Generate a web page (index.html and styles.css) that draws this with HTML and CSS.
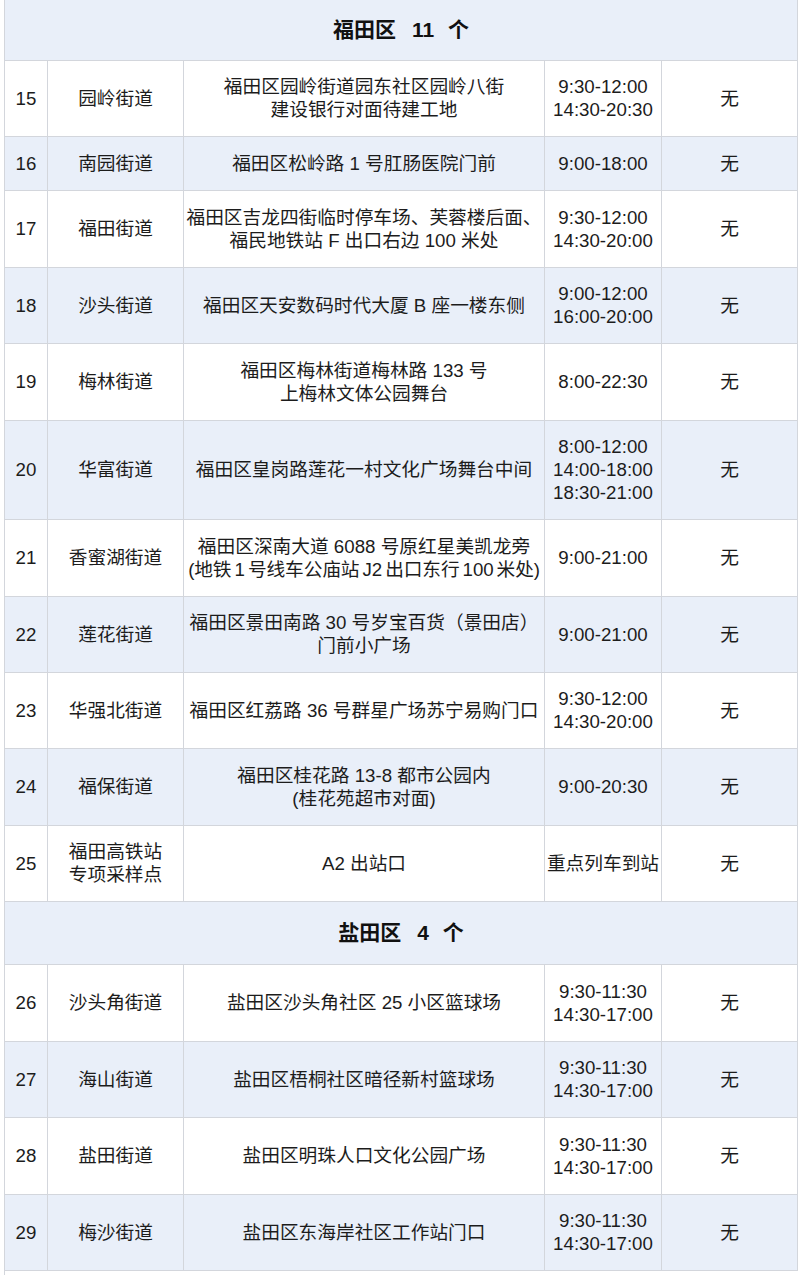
FILE: index.html
```
<!DOCTYPE html>
<html lang="zh-CN">
<head>
<meta charset="utf-8">
<title>核酸采样点</title>
<link rel="stylesheet" href="styles.css">
</head>
<body>
<table class="sites">
  <colgroup>
    <col class="c-no"><col class="c-street"><col class="c-addr"><col class="c-time"><col class="c-note">
  </colgroup>
  <tbody>
    <tr class="district h60"><td colspan="5"><span>福田区</span><span class="cnt">11</span><span>个</span></td></tr>
    <tr class="h76"><td>15</td><td>园岭街道</td><td>福田区园岭街道园东社区园岭八街<br>建设银行对面待建工地</td><td>9:30-12:00<br>14:30-20:30</td><td>无</td></tr>
    <tr class="alt h54"><td>16</td><td>南园街道</td><td>福田区松岭路 1 号肛肠医院门前</td><td>9:00-18:00</td><td>无</td></tr>
    <tr class="h77"><td>17</td><td>福田街道</td><td>福田区吉龙四街临时停车场、芙蓉楼后面、<br>福民地铁站 F 出口右边 100 米处</td><td>9:30-12:00<br>14:30-20:00</td><td>无</td></tr>
    <tr class="alt h76"><td>18</td><td>沙头街道</td><td>福田区天安数码时代大厦 B 座一楼东侧</td><td>9:00-12:00<br>16:00-20:00</td><td>无</td></tr>
    <tr class="h77"><td>19</td><td>梅林街道</td><td>福田区梅林街道梅林路 133 号<br>上梅林文体公园舞台</td><td>8:00-22:30</td><td>无</td></tr>
    <tr class="alt h99"><td>20</td><td>华富街道</td><td>福田区皇岗路莲花一村文化广场舞台中间</td><td>8:00-12:00<br>14:00-18:00<br>18:30-21:00</td><td>无</td></tr>
    <tr class="h77"><td>21</td><td>香蜜湖街道</td><td>福田区深南大道 6088 号原红星美凯龙旁<br><span class="tight">(地铁 1 号线车公庙站 J2 出口东行 100 米处)</span></td><td>9:00-21:00</td><td>无</td></tr>
    <tr class="alt h76"><td>22</td><td>莲花街道</td><td>福田区景田南路 30 号岁宝百货（景田店）<br>门前小广场</td><td>9:00-21:00</td><td>无</td></tr>
    <tr class="h76"><td>23</td><td>华强北街道</td><td>福田区红荔路 36 号群星广场苏宁易购门口</td><td>9:30-12:00<br>14:30-20:00</td><td>无</td></tr>
    <tr class="alt h77"><td>24</td><td>福保街道</td><td>福田区桂花路 13-8 都市公园内<br>(桂花苑超市对面)</td><td>9:00-20:30</td><td>无</td></tr>
    <tr class="h76"><td>25</td><td>福田高铁站<br>专项采样点</td><td>A2 出站口</td><td>重点列车到站</td><td>无</td></tr>
    <tr class="district h63"><td colspan="5"><span>盐田区</span><span class="cnt">4</span><span>个</span></td></tr>
    <tr class="h77"><td>26</td><td>沙头角街道</td><td>盐田区沙头角社区 25 小区篮球场</td><td>9:30-11:30<br>14:30-17:00</td><td>无</td></tr>
    <tr class="alt h76"><td>27</td><td>海山街道</td><td>盐田区梧桐社区暗径新村篮球场</td><td>9:30-11:30<br>14:30-17:00</td><td>无</td></tr>
    <tr class="h77"><td>28</td><td>盐田街道</td><td>盐田区明珠人口文化公园广场</td><td>9:30-11:30<br>14:30-17:00</td><td>无</td></tr>
    <tr class="alt h76"><td>29</td><td>梅沙街道</td><td>盐田区东海岸社区工作站门口</td><td>9:30-11:30<br>14:30-17:00</td><td>无</td></tr>
    <tr class="tail"><td colspan="5"></td></tr>
  </tbody>
</table>
</body>
</html>
```
FILE: styles.css
```
html, body {
  margin: 0;
  padding: 0;
  background: #ffffff;
}
body {
  font-family: "Liberation Sans", "Noto Sans CJK SC", sans-serif;
  color: #1c1c1c;
  overflow: hidden;
}
.sites {
  margin-left: 4px;
  width: 793px;
  border-collapse: collapse;
  table-layout: fixed;
  font-size: 18.7px;
  line-height: 23px;
}
.c-no { width: 43px; }
.c-street { width: 136px; }
.c-addr { width: 361px; }
.c-time { width: 117px; }
.c-note { width: 136px; }
.sites td {
  border: 1px solid #d3d6dc;
  text-align: center;
  vertical-align: middle;
  padding: 0;
  white-space: nowrap;
  overflow: hidden;
}
.sites tr:first-child td { border-top: none; }
.alt td { background: #e9eff9; }
.tight { word-spacing: -2px; letter-spacing: -0.1px; }
.district td {
  background: #e9eff9;
  font-size: 21px;
  font-weight: 700;
  color: #111;
}
.district .cnt { margin: 0 14px 0 16px; }
.h54 { height: 54px; }
.h60 { height: 60px; }
.h63 { height: 63px; }
.h76 { height: 76px; }
.h77 { height: 77px; }
.h99 { height: 99px; }
.tail { height: 20px; }
.tail td { border-bottom: none; border-right: none; }
```
